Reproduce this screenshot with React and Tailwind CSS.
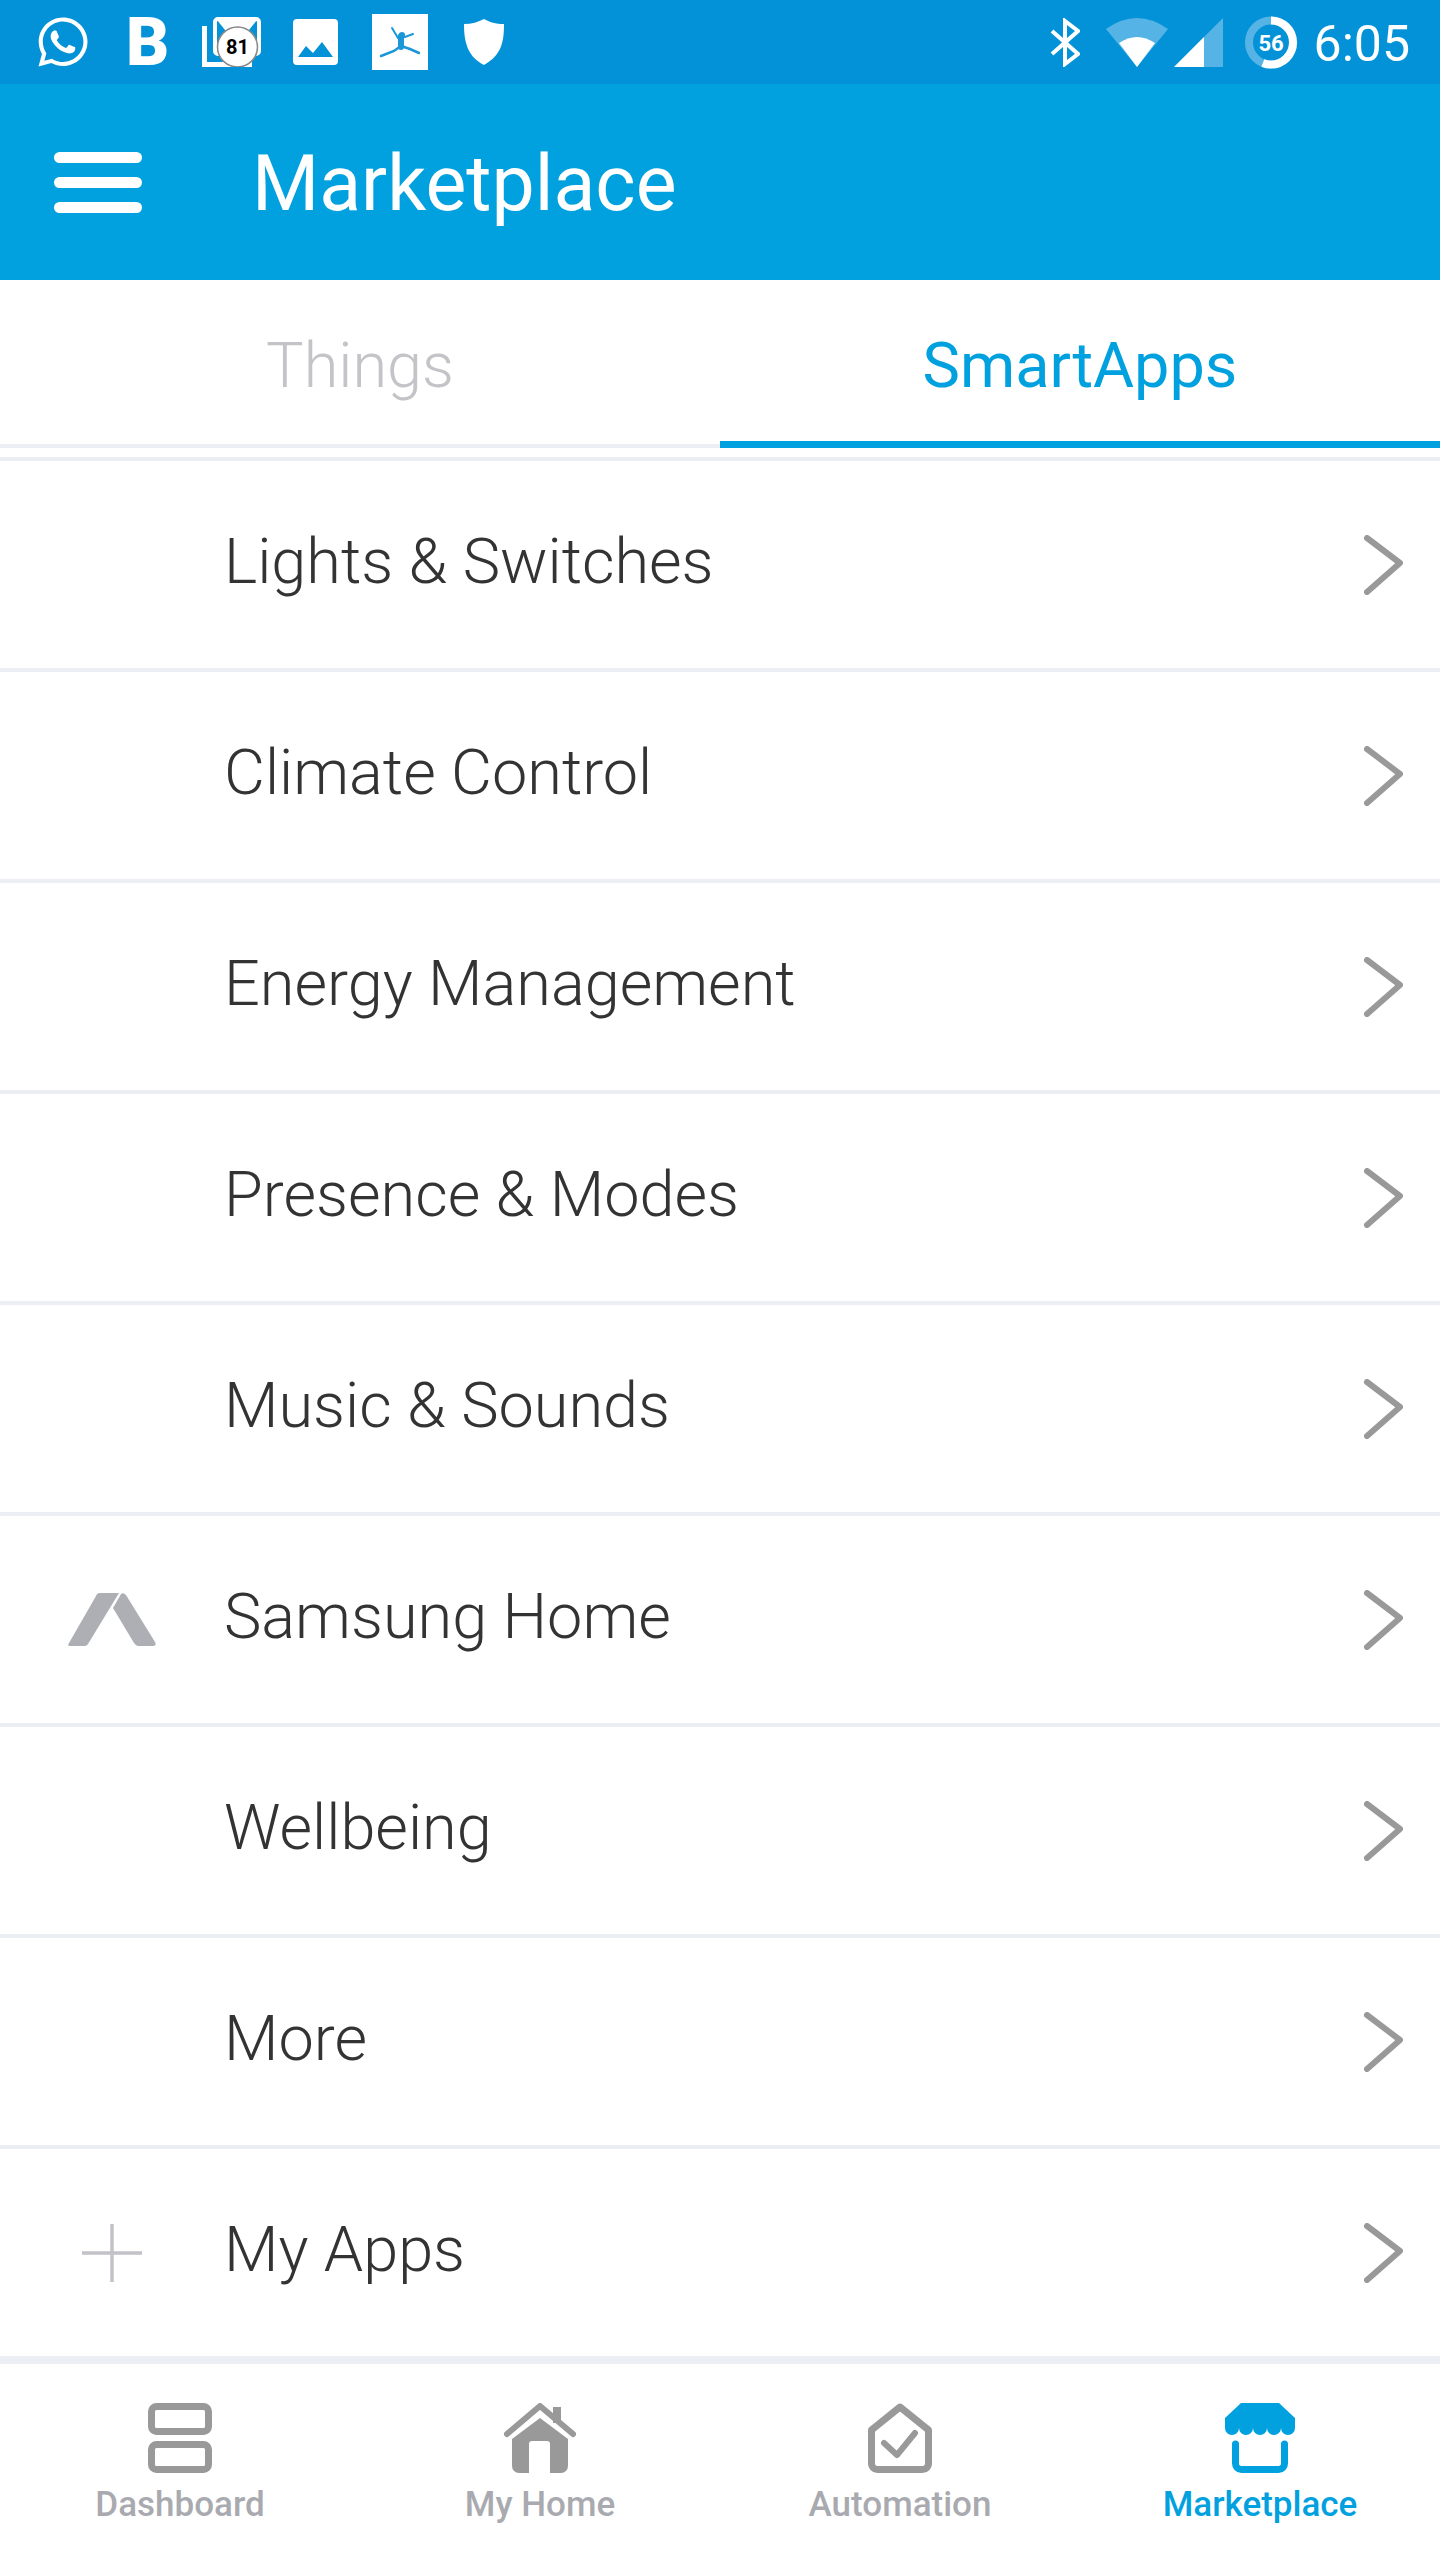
import { FaWhatsapp } from "react-icons/fa";

const rows = [
  "Lights & Switches",
  "Climate Control",
  "Energy Management",
  "Presence & Modes",
  "Music & Sounds",
  "Samsung Home",
  "Wellbeing",
  "More",
  "My Apps",
];

function MailIcon() {
  return (
    <svg width="59" height="50" viewBox="0 0 59 50" className="ml-[33px]">
      <path d="M2.5 9V47.5H50" fill="none" stroke="#fff" strokeWidth="5" />
      <rect x="13" y="2" width="44" height="35" rx="3" fill="#0392d8" stroke="#fff" strokeWidth="4" />
      <path d="M15 3H55L35 28Z" fill="#fff" />
      <circle cx="35.5" cy="30" r="20" fill="#fff" stroke="#888" strokeWidth="1.5" />
      <text x="35.5" y="37" textAnchor="middle" fontFamily="Roboto" fontWeight="700" fontSize="20" fill="#000">81</text>
    </svg>
  );
}

function ImageIcon() {
  return (
    <svg width="45" height="46" viewBox="0 0 45 46" className="ml-[32px]">
      <path d="M4 0H41a4 4 0 0 1 4 4V42a4 4 0 0 1-4 4H4a4 4 0 0 1-4-4V4a4 4 0 0 1 4-4ZM5 38H40L29 23L20 34L13 27Z" fill="#fff" fillRule="evenodd" />
    </svg>
  );
}

function JumpIcon() {
  return (
    <svg width="56" height="56" viewBox="0 0 56 56" className="ml-[34px]">
      <rect width="56" height="56" fill="#fff" />
      <g fill="none" stroke="#1b97d9" strokeLinecap="round">
        <path d="M20 14L26 24L33 23L41 20" strokeWidth="2" />
        <path d="M29 22V33" strokeWidth="6" />
        <path d="M9 42L22 37L29 32L38 35L47 39" strokeWidth="2.5" />
      </g>
      <circle cx="30" cy="21" r="3" fill="#1b97d9" />
    </svg>
  );
}

function ShieldIcon() {
  return (
    <svg width="40" height="46" viewBox="0 0 40 46" className="ml-[36px]">
      <path d="M20 0C25 3 32 5 40 5C40 22 38 36 20 46C5 38 0 26 0 5C8 5 14 3 20 0Z" fill="#fff" />
    </svg>
  );
}

function BluetoothIcon() {
  return (
    <svg width="30" height="49" viewBox="0 0 30 49">
      <path d="M2 13L28 36L15 46V3L28 13L2 36" fill="none" stroke="#fff" strokeWidth="4" />
    </svg>
  );
}

function WifiIcon() {
  return (
    <svg width="62" height="49" viewBox="0 0 62 49" className="ml-[26px]">
      <path d="M0 11Q31 -11 62 11L31 49Z" fill="#55b4e5" />
      <path d="M13 25Q31 13 49 25L31 49Z" fill="#fff" />
    </svg>
  );
}

function SignalIcon() {
  return (
    <svg width="49" height="49" viewBox="0 0 49 49" className="ml-[6px]">
      <path d="M0 49L49 0V49Z" fill="#55b4e5" />
      <path d="M0 49L30 19V49Z" fill="#fff" />
    </svg>
  );
}

function BatteryIcon() {
  return (
    <svg width="52" height="53" viewBox="0 0 52 53" className="ml-[22px]">
      <circle cx="26" cy="26.5" r="22" fill="none" stroke="#55b4e5" strokeWidth="8" />
      <circle cx="26" cy="26.5" r="22" fill="none" stroke="#fff" strokeWidth="8" strokeDasharray="77 138" transform="rotate(-90 26 26.5)" />
      <text x="26" y="34.5" textAnchor="middle" fontFamily="Roboto" fontWeight="700" fontSize="22" fill="#fff">56</text>
    </svg>
  );
}

function Chevron() {
  return (
    <svg width="40" height="60" viewBox="0 0 40 60" className="mr-[37px] shrink-0">
      <path d="M4 3L37 28L4 57" fill="none" stroke="#999" strokeWidth="6" strokeLinecap="round" strokeLinejoin="round" />
    </svg>
  );
}

function SamsungLogo() {
  return (
    <svg width="88" height="53" viewBox="0 0 88 53">
      <path d="M32 0H51L20 51Q19 53 17 53H2Q-1 53 1 50L28 3Q29 0 32 0Z" fill="#aeafb4" />
      <path d="M53 1Q55 -1 58 2L87 49Q89 53 85 53H70Q68 53 66 50L45 15Z" fill="#aeafb4" />
    </svg>
  );
}

function PlusIcon() {
  return (
    <svg width="60" height="58" viewBox="0 0 60 58">
      <path d="M30 0V58M0 29H60" stroke="#c2c2c8" strokeWidth="3.5" />
    </svg>
  );
}

function DashboardIcon() {
  return (
    <svg width="64" height="70" viewBox="0 0 64 70">
      <rect x="3.5" y="3.5" width="57" height="25" rx="5" fill="none" stroke="#999" strokeWidth="7" />
      <rect x="3.5" y="41.5" width="57" height="25" rx="5" fill="none" stroke="#999" strokeWidth="7" />
    </svg>
  );
}

function HomeIcon() {
  return (
    <svg width="74" height="70" viewBox="0 0 74 70">
      <rect x="50" y="4" width="8" height="16" fill="#999" />
      <path d="M4 31L37 3L70 31" fill="none" stroke="#999" strokeWidth="6" strokeLinejoin="round" strokeLinecap="round" />
      <path d="M37 15L65 36V63a7 7 0 0 1-7 7H47V41a3 3 0 0 0-3-3H29a3 3 0 0 0-3 3V70H16a7 7 0 0 1-7-7V36Z" fill="#999" />
    </svg>
  );
}

function AutomationIcon() {
  return (
    <svg width="64" height="70" viewBox="0 0 64 70">
      <path d="M32 4L60.5 27V60a6 6 0 0 1-6 6.5H9.5a6 6 0 0 1-6-6.5V27Z" fill="none" stroke="#999" strokeWidth="7" strokeLinejoin="round" />
      <path d="M16 40L29 52L47 30" fill="none" stroke="#999" strokeWidth="6" strokeLinecap="round" strokeLinejoin="round" />
    </svg>
  );
}

function MarketIcon() {
  return (
    <svg width="70" height="70" viewBox="0 0 70 70">
      <path d="M16 0H54L70 15V25a7 7 0 0 1-14 0a7 7 0 0 1-14 0a7 7 0 0 1-14 0a7 7 0 0 1-14 0a7 7 0 0 1-14 0V15Z" fill="#01a1df" />
      <path d="M10.5 41V60a6 6 0 0 0 6 6.5H53.5a6 6 0 0 0 6-6.5V41" fill="none" stroke="#01a1df" strokeWidth="7" strokeLinecap="round" />
    </svg>
  );
}

function NavItem({ icon, label, active }) {
  return (
    <div className="flex flex-col items-center pt-[39px]">
      <div className="h-[70px] flex items-center">{icon}</div>
      <span className={`mt-[12px] text-[35px] leading-[40px] font-medium ${active ? "text-[#01a1df]" : "text-[#a9aab0]"}`}>
        {label}
      </span>
    </div>
  );
}

export default function App() {
  return (
    <div className="w-[1440px] h-[2560px] bg-white flex flex-col overflow-hidden font-['Roboto',sans-serif]">
      {/* status bar */}
      <div className="h-[84px] shrink-0 bg-[#0392d8] flex items-center justify-between pl-[35px] pr-[30px]">
        <div className="flex items-center">
          <FaWhatsapp className="text-white w-[56px] h-[56px]" />
          <span className="ml-[35px] w-[43px] text-white font-black text-[67px] leading-[67px]">B</span>
          <MailIcon />
          <ImageIcon />
          <JumpIcon />
          <ShieldIcon />
        </div>
        <div className="flex items-center">
          <BluetoothIcon />
          <WifiIcon />
          <SignalIcon />
          <BatteryIcon />
          <span className="ml-[17px] text-white text-[50px] leading-[56px] pt-[4px]">6:05</span>
        </div>
      </div>

      {/* app bar */}
      <div className="h-[196px] shrink-0 bg-[#01a1df] flex items-center pl-[54px]">
        <div className="w-[88px] flex flex-col gap-[14px]">
          <span className="block h-[11px] rounded-full bg-white" />
          <span className="block h-[11px] rounded-full bg-white" />
          <span className="block h-[11px] rounded-full bg-white" />
        </div>
        <h1 className="ml-[110px] text-white text-[77px] leading-[90px] pt-[4px]">Marketplace</h1>
      </div>

      {/* tabs */}
      <div className="h-[168px] shrink-0 grid grid-cols-2">
        <div className="flex items-center justify-center border-b-4 border-[#ebeef3] text-[#c4c4c8] text-[63px] font-light pt-[8px]">Things</div>
        <div className="flex items-center justify-center border-b-[7px] border-[#01a1df] text-[#01a1df] text-[63px] pt-[11px]">SmartApps</div>
      </div>

      {/* list */}
      <div className="mt-[9px] border-t-4 border-[#ebeef3]">
        {rows.map((label, i) => (
          <div key={label} className={`flex items-center ${i === rows.length - 1 ? "h-[215px] border-b-8" : "h-[211px] border-b-4"} border-[#ebeef3]`}>
            <div className="w-[224px] shrink-0 flex justify-center">
              {label === "Samsung Home" && <SamsungLogo />}
              {label === "My Apps" && <PlusIcon />}
            </div>
            <span className="flex-1 text-[63px] leading-[72px] font-light text-[#333] pb-[6px]">{label}</span>
            <Chevron />
          </div>
        ))}
      </div>

      {/* bottom nav */}
      <div className="flex-1 grid grid-cols-4">
        <NavItem icon={<DashboardIcon />} label="Dashboard" />
        <NavItem icon={<HomeIcon />} label="My Home" />
        <NavItem icon={<AutomationIcon />} label="Automation" />
        <NavItem icon={<MarketIcon />} label="Marketplace" active />
      </div>
    </div>
  );
}
